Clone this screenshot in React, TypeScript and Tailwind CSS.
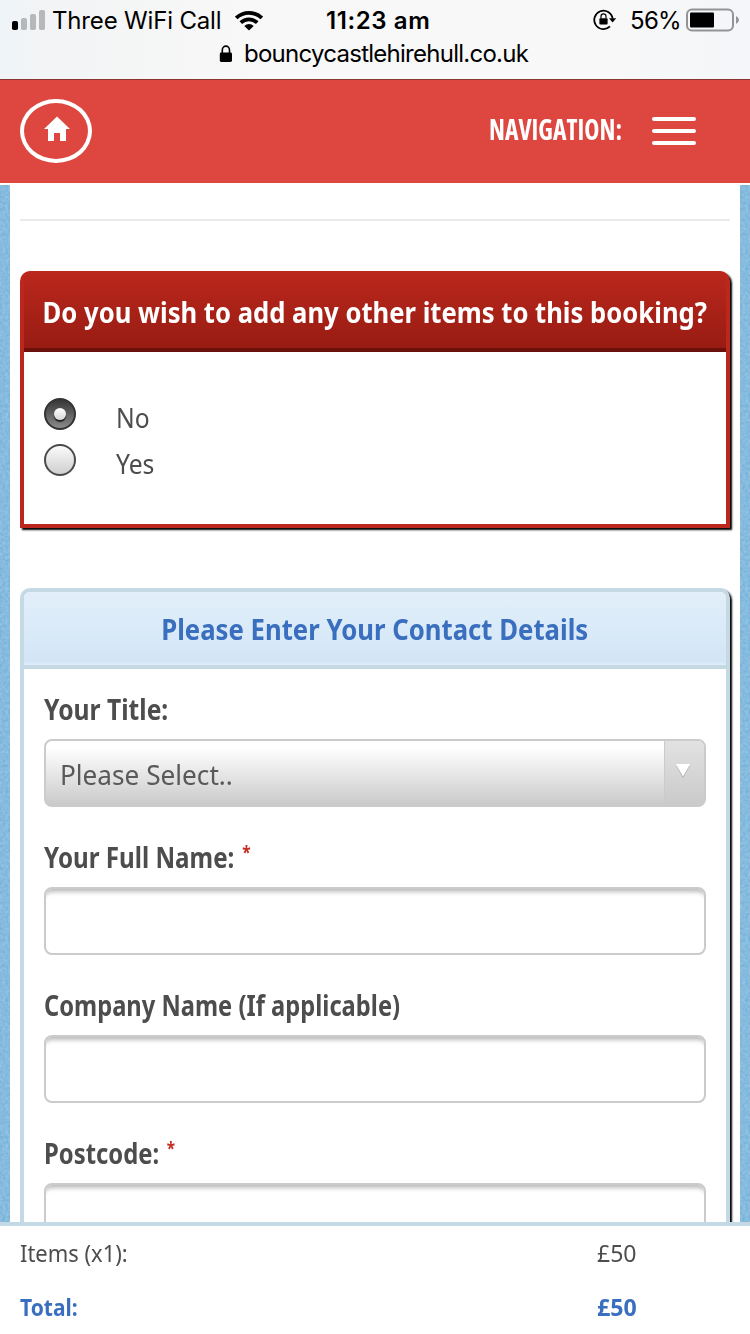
import React from "react";

function StatusBar() {
  return (
    <div className="h-[80px] shrink-0 border-b border-[#8a3433] bg-linear-[90deg,#eff4f8_0%,#f3f4f5_7%,#f8f8f8_35%,#f8f8f8_80%,#f4f6f9_100%] font-['Inter',sans-serif] text-[24px] text-black">
      <div className="flex h-[40px] items-center">
        <svg className="ml-[12px] h-[22px] w-[34px] shrink-0" viewBox="0 0 34 22">
          <rect x="0" y="12" width="6" height="9" rx="1.8" fill="#000" />
          <rect x="9" y="9" width="6" height="12" rx="1.8" fill="#b7b8b9" />
          <rect x="18" y="5" width="6" height="16" rx="1.8" fill="#b7b8b9" />
          <rect x="27" y="1" width="6" height="20" rx="1.8" fill="#b7b8b9" />
        </svg>
        <span className="mt-[2px] ml-[6px] w-[183px] whitespace-nowrap tracking-[-0.17px]">Three WiFi Call</span>
        <svg className="h-[21px] w-[28px] shrink-0" viewBox="0 0 28 21">
          <g fill="none" stroke="#000" strokeWidth="3.7">
            <path d="M1.2 8 A18.4 18.4 0 0 1 26.8 8" />
            <path d="M5.8 12.7 A11.8 11.8 0 0 1 22.2 12.7" />
          </g>
          <path d="M14 20.5 L9.3 15.9 A6.8 6.8 0 0 1 18.7 15.9 Z" fill="#000" />
        </svg>
        <span className="mt-[2px] ml-[63px] w-[267px] whitespace-nowrap font-semibold tracking-[0.6px]">11:23 am</span>
        <svg className="h-[22px] w-[24px] shrink-0" viewBox="0 0 24 22">
          <path d="M17 17.4 A9.2 9.2 0 1 1 19.6 9.7" fill="none" stroke="#000" strokeWidth="1.8" />
          <path d="M16 9.2 H23.2 L19.6 13.4 Z" fill="#000" />
          <rect x="6.4" y="9.2" width="8.2" height="6.2" rx="1" fill="#000" />
          <path d="M8 9.6 V7.3 A2.5 2.5 0 0 1 13 7.3 V9.6" fill="none" stroke="#000" strokeWidth="1.2" />
        </svg>
        <span className="mt-[2px] ml-[13px] w-[56px] whitespace-nowrap tracking-[-0.7px]">56%</span>
        <svg className="h-[24px] w-[54px] shrink-0" viewBox="0 0 54 24">
          <rect x="1" y="1.5" width="46" height="21" rx="5" fill="none" stroke="#939495" strokeWidth="2" />
          <rect x="4" y="4.5" width="24" height="15" rx="1" fill="#000" />
          <path d="M50 8 Q53 9.5 53 12 Q53 14.5 50 16 Z" fill="#939495" />
        </svg>
      </div>
      <div className="flex h-[28px] items-center">
        <svg className="ml-[219px] h-[18px] w-[13px] shrink-0" viewBox="0 0 13 18">
          <rect x="0.8" y="7.5" width="12.2" height="9.5" rx="1.4" fill="#000" />
          <path d="M3.3 8.5 V5 A3.6 3.9 0 0 1 10.5 5 V8.5" fill="none" stroke="#000" strokeWidth="1.6" />
        </svg>
        <span className="ml-[12px] whitespace-nowrap tracking-[-0.74px]">bouncycastlehirehull.co.uk</span>
      </div>
    </div>
  );
}

function SiteHeader() {
  return (
    <header className="flex h-[103px] shrink-0 items-center bg-[#dd4740] pb-[2px]">
      <a className="ml-[20px] flex h-[64px] w-[72px] items-center justify-center rounded-[50%] border-4 border-white">
        <svg className="mb-[4px] ml-[2px] h-[26px] w-[26px]" viewBox="0 0 26 26">
          <path d="M13 0.5 L26 13 H22 V25 H16 V17 H10 V25 H4 V13 H0 Z" fill="#fff" />
        </svg>
      </a>
      <span className="mb-[4px] ml-auto w-[163px] whitespace-nowrap font-['Open_Sans',sans-serif] text-[28px] leading-[36px] font-bold text-white [font-stretch:75%]">
        <span className="inline-block origin-left scale-x-[0.915]">NAVIGATION:</span>
      </span>
      <span className="mr-[54px] flex w-[44px] flex-col gap-[8px]">
        <i className="h-[4px] rounded-full bg-white" />
        <i className="h-[4px] rounded-full bg-white" />
        <i className="h-[4px] rounded-full bg-white" />
      </span>
    </header>
  );
}

function Texture() {
  return (
    <svg className="h-full w-[10px] shrink-0 bg-[#84badd]">
      <filter id="grain" x="0" y="0" width="100%" height="100%" colorInterpolationFilters="sRGB">
        <feTurbulence type="fractalNoise" baseFrequency="0.35" numOctaves="3" seed="4" />
        <feColorMatrix values="0.16 0 0 0 0.443  0.13 0 0 0 0.668  0.1 0 0 0 0.82  0 0 0 0 1" />
      </filter>
      <rect width="10" height="1100" filter="url(#grain)" />
    </svg>
  );
}

type LabelProps = { label: string; squeeze: string; required?: boolean };

function Label({ label, squeeze, required }: LabelProps) {
  return (
    <div className="h-[54px] text-[28px] leading-[48px] font-bold whitespace-nowrap text-[#4d4d4d]">
      <span className={`flex w-max origin-left ${squeeze}`}>
        {label}
        {required && <span className="ml-[9px] text-[18px] leading-[39px] text-[#c22a22]">*</span>}
      </span>
    </div>
  );
}

function Field(props: LabelProps) {
  return (
    <div className="mb-[26px]">
      <Label {...props} />
      <div className="h-[68px] rounded-[8px] border-2 border-[#cbcbcb] bg-white shadow-[inset_0_7px_4px_-4px_#bdbdbd]" />
    </div>
  );
}

function Radio({ label, checked }: { label: string; checked?: boolean }) {
  return (
    <div className="flex h-[46px]">
      {checked ? (
        <span className="flex size-[32px] items-center justify-center rounded-full border-2 border-[#333] bg-linear-to-b from-[#383838] to-[#8a8a8a]">
          <span className="size-[12px] rounded-full bg-linear-to-b from-white to-[#d6d6d6] shadow-[0_2px_1px_#222]" />
        </span>
      ) : (
        <span className="size-[32px] rounded-full border-2 border-[#4a4a4a] bg-linear-to-b from-[#fbfbfb] to-[#cfcfcf]" />
      )}
      <span className="ml-[40px] origin-left scale-x-[0.88] text-[28px] leading-[39px] text-[#4d4d4d]">{label}</span>
    </div>
  );
}

export default function App() {
  return (
    <div className="flex h-[1334px] w-[750px] flex-col overflow-hidden bg-white">
      <StatusBar />
      <SiteHeader />
      <div className="mt-[2px] flex h-[1037px] shrink-0 overflow-hidden font-['Noto_Sans',sans-serif]">
        <Texture />
        <main className="h-full flex-1 overflow-hidden px-[10px]">
          <div className="mt-[34px] h-[2px] bg-[#ebebeb]" />

          <section className="mt-[50px] h-[257px] rounded-t-[10px] bg-[#bb271c] px-[4px] pb-[4px] shadow-[2px_2px_2px_#000]">
            <h2 className="flex h-[81px] justify-center rounded-t-[8px] border-b-4 border-[#6b100a] bg-linear-to-b from-[#bb271c] to-[#981c13] text-[29px] leading-[82px] font-bold whitespace-nowrap text-white">
              <span className="shrink-0 scale-x-[0.884]">Do you wish to add any other items to this booking?</span>
            </h2>
            <div className="h-[172px] bg-white px-[20px] pt-[46px]">
              <Radio label="No" checked />
              <Radio label="Yes" />
            </div>
          </section>

          <section className="mt-[60px] h-[700px] rounded-t-[10px] border-4 border-[#c5d9e4] bg-white shadow-[2px_2px_2px_#000]">
            <h2 className="flex h-[77px] justify-center rounded-t-[6px] border-b-4 border-[#c5d9e4] bg-linear-to-b from-[#e2effa] to-[#d2e5f6] text-[29px] leading-[73px] font-bold whitespace-nowrap text-[#396fbe] shadow-[inset_0_-3px_2px_-1px_#e0eefa]">
              <span className="shrink-0 scale-x-[0.887]">Please Enter Your Contact Details</span>
            </h2>
            <div className="px-[20px] pt-[16px]">
              <div className="mb-[26px]">
                <Label label="Your Title:" squeeze="scale-x-[0.88]" />
                <div className="flex h-[68px] overflow-hidden rounded-[8px] border-2 border-[#cbcbcb] bg-linear-to-b from-white from-10% to-[#cacaca]">
                  <span className="flex-1 pl-[14px] text-[28px] leading-[66px] text-[#595959]">
                    <span className="inline-block origin-left scale-x-[0.935]">Please Select..</span>
                  </span>
                  <span className="flex w-[40px] justify-center border-l border-[#cbcbcb] bg-linear-to-b from-[#e2e2e2] to-[#cacaca] pt-[22px] pr-[3px]">
                    <svg className="h-[16px] w-[16px]" viewBox="0 0 16 16">
                      <path d="M1 2.5 L8 15 L15 2.5 Z" fill="#aaa" />
                      <path d="M0.7 1 H15.3 L8 13.5 Z" fill="#fff" />
                    </svg>
                  </span>
                </div>
              </div>
              <Field label="Your Full Name:" squeeze="scale-x-[0.863]" required />
              <Field label="Company Name (If applicable)" squeeze="scale-x-[0.847]" />
              <Field label="Postcode:" squeeze="scale-x-[0.851]" required />
            </div>
          </section>
        </main>
        <Texture />
      </div>
      <footer className="h-[112px] shrink-0 border-t-4 border-[#c5d9e4] bg-white pl-[20px] font-['Noto_Sans',sans-serif] text-[24px] leading-[54px]">
        <div className="flex text-[#4d4d4d]">
          <span className="w-[577px]">
            <span className="inline-block origin-left scale-x-[0.915]">Items (x1):</span>
          </span>
          <span className="origin-left scale-x-[0.96]">£50</span>
        </div>
        <div className="flex font-bold text-[#396fbe]">
          <span className="w-[577px]">
            <span className="inline-block origin-left scale-x-[0.875]">Total:</span>
          </span>
          <span className="origin-left scale-x-[0.965]">£50</span>
        </div>
      </footer>
    </div>
  );
}
